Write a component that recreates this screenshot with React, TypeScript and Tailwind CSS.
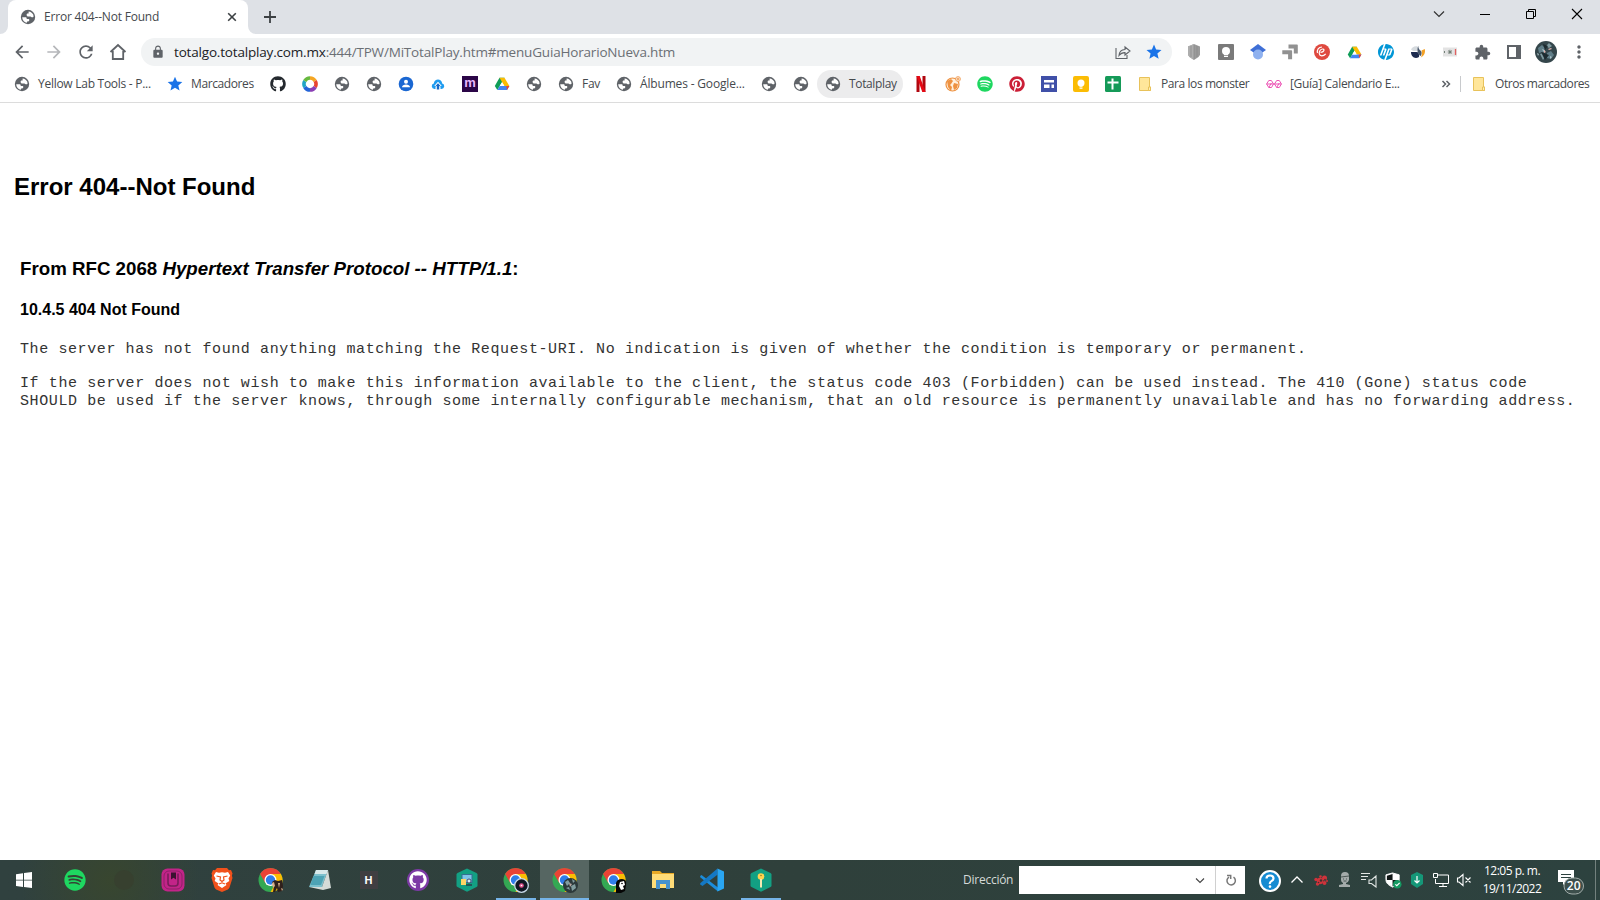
import type { ReactNode } from "react";
import { FaGithub, FaSpotify, FaPinterest } from "react-icons/fa";
import { SiHp } from "react-icons/si";
import { MdArrowBack, MdArrowForward, MdRefresh, MdLock, MdStar, MdExtension, MdMoreVert } from "react-icons/md";

function Globe({ className = "size-4" }: { className?: string }) {
  return (
    <svg viewBox="0 0 16 16" className={`shrink-0 ${className}`}>
      <circle cx="8" cy="8" r="7.2" fill="#5f6368" />
      <path d="M2.2 8.200h3.100c.9 0 1.400.5 1.400 1.200v.7h1.600c.7 0 1 .4 1 1 0 .8-.5 1.300-1.200 1.300H7v1.400C4.300 13.300 2.200 11 2.200 8.200z" fill="#fff" />
      <path d="M8.600 2.400c2 .2 3.700 1.400 4.600 3.100l.4 1.900c-.3.600-.8.900-1.400.9-.9 0-1-.9-1.800-.9H8.300c-1 0-1.700-.6-1.700-1.500 0-.8.600-1.300 1.300-1.300h.7z" fill="#fff" />
    </svg>
  );
}

function Drive({ className = "size-4" }: { className?: string }) {
  return (
    <svg viewBox="0 0 16 16" className={className}>
      <path d="M5.500 1.800h5L8 6.200 3.300 14 .8 10z" fill="#0f9d58" />
      <path d="M5.500 1.800h5L15.400 10h-5z" fill="#fbbc04" />
      <path d="M3.300 14l2.400-4h9.700L13 14z" fill="#4285f4" />
      <path d="M12.300 10h3.100L13 14z" fill="#ea4335" />
      <path d="M8 6.200L10.300 10H5.700z" fill="#fff" />
    </svg>
  );
}

function Folder() {
  return (
    <svg viewBox="0 0 16 16" className="size-4 shrink-0">
      <path d="M2.500 1.500h10v9.500h1v3.500h-11z" fill="#ffe69a" stroke="#e8c25a" />
      <path d="M11.500 14.500v-3.500h2v3.500z" fill="#fff0b5" stroke="#e8c25a" />
    </svg>
  );
}

function Chrome({ badge }: { badge: ReactNode }) {
  return (
    <svg viewBox="0 0 26 26" className="size-[26px]">
      <circle cx="12.500" cy="13" r="12" fill="#34a853" />
      <path d="M2.100 7A12 12 0 0 1 22.900 7H12.500l-5.200 9z" fill="#ea4335" />
      <path d="M22.900 7A12 12 0 0 1 12.500 25l5.200-9L12.500 7z" fill="#fbbc04" />
      <circle cx="12.500" cy="13" r="6" fill="#fff" />
      <circle cx="12.500" cy="13" r="4.700" fill="#2f7de9" />
      {badge}
    </svg>
  );
}

function Bookmark({ icon, label, width = "" }: { icon: ReactNode; label?: string; width?: string }) {
  return (
    <div className="flex h-7 shrink-0 items-center gap-2 px-2">
      <span className="flex size-4 shrink-0 items-center justify-center">{icon}</span>
      {label && <span className={`whitespace-nowrap ${width}`}>{label}</span>}
    </div>
  );
}

function ExtIcon({ children }: { children: ReactNode }) {
  return <div className="flex size-8 shrink-0 items-center justify-center">{children}</div>;
}

function TabStrip() {
  return (
    <div className="flex h-[34px] shrink-0 bg-[#dee1e6]">
      <svg viewBox="0 0 8 34" className="h-[34px] w-2 shrink-0">
        <path d="M8 26v8H0a8 8 0 0 0 8-8z" fill="#fff" />
      </svg>
      <div className="flex w-60 shrink-0 items-center rounded-t-lg bg-white pl-3">
        <Globe />
        <span className="ml-2 w-[180px] whitespace-nowrap text-[12px] tracking-[-0.200px] text-[#45494d]">Error 404--Not Found</span>
        <svg viewBox="0 0 16 16" className="size-4">
          <path d="M4.200 4.200l7.600 7.600M11.800 4.200l-7.600 7.600" stroke="#3c4043" strokeWidth="1.600" />
        </svg>
      </div>
      <svg viewBox="0 0 8 34" className="h-[34px] w-2 shrink-0">
        <path d="M0 26v8h8a8 8 0 0 1-8-8z" fill="#fff" />
      </svg>
      <svg viewBox="0 0 28 34" className="h-[34px] w-7">
        <path d="M14 11v12M8 17h12" stroke="#3c4043" strokeWidth="1.800" />
      </svg>
      <div className="ml-auto flex h-7 text-black">
        <svg viewBox="0 0 46 28" className="h-7 w-[46px]"><path d="M18 11.500l5 5 5-5" fill="none" stroke="#333" strokeWidth="1.200" /></svg>
        <svg viewBox="0 0 46 28" className="h-7 w-[46px]"><path d="M18 14.500h10" stroke="#000" /></svg>
        <svg viewBox="0 0 46 28" className="h-7 w-[46px]"><path d="M18.500 11.500h7v7h-7zM20.500 11.500v-2h7v7h-2" fill="none" stroke="#000" /></svg>
        <svg viewBox="0 0 46 28" className="h-7 w-[46px]"><path d="M18 9l10 10M28 9L18 19" stroke="#000" strokeWidth="1.100" /></svg>
      </div>
    </div>
  );
}

function Toolbar() {
  return (
    <div className="flex h-9 shrink-0 items-center bg-white pl-1.5 text-[#5f6368]">
      <ExtIcon><MdArrowBack className="size-[20px]" /></ExtIcon>
      <ExtIcon><MdArrowForward className="size-[20px] text-[#b5b7ba]" /></ExtIcon>
      <ExtIcon><MdRefresh className="size-5" /></ExtIcon>
      <ExtIcon>
        <svg viewBox="0 0 18 18" className="size-[18px]">
          <path d="M1.500 9L9 2l7.500 7M3.800 8v8h10.400V8" fill="none" stroke="#5f6368" strokeWidth="1.800" />
        </svg>
      </ExtIcon>
      <div className="ml-[7px] flex h-7 w-[1031px] shrink-0 items-center rounded-full bg-[#f1f3f4] pl-[10px] pr-[9px]">
        <MdLock className="size-[14px]" />
        <span className="ml-[9px] whitespace-nowrap text-[13.500px] tracking-[-0.180px] text-[#6b6f74]">
          <span className="text-[#202124]">totalgo.totalplay.com.mx</span>:444/TPW/MiTotalPlay.htm#menuGuiaHorarioNueva.htm
        </span>
        <svg viewBox="0 0 16 16" className="ml-auto size-4">
          <path d="M1 4v10.500h11V11M4 11.500c.3-3.800 2.700-5.800 6-6V3l5 4-5 4V8.600C7.500 8.500 5.500 9.500 4 11.500z" fill="none" stroke="#5f6368" strokeWidth="1.100" />
        </svg>
        <MdStar className="ml-[14px] size-[18px] text-[#1a73e8]" />
      </div>
      <div className="ml-1.5 flex items-center">
        <ExtIcon>
          <svg viewBox="0 0 16 16" className="size-4"><path d="M8 0l6 2.500v8q0 2-6 5.500-6-3.500-6-5.500v-8z" fill="#9a9a9a" /><path d="M8 0v16q-6-3.500-6-5.500v-8z" fill="#adadad" /><path d="M8 1v14M5 2v11M11 2v11" stroke="#868686" strokeWidth=".7" /></svg>
        </ExtIcon>
        <ExtIcon>
          <svg viewBox="0 0 16 16" className="size-4"><rect width="16" height="16" rx="1" fill="#7a7a7a" /><circle cx="8" cy="7" r="4" fill="#fff" /><path d="M6 10h4v3H6z" fill="#fff" /><path d="M6 11.500h4" stroke="#7a7a7a" strokeWidth=".7" /></svg>
        </ExtIcon>
        <ExtIcon>
          <svg viewBox="0 0 16 16" className="size-4"><path d="M0 6l8-6 8 6-5 3.500H5z" fill="#3f6fd6" /><circle cx="8" cy="10.500" r="5" fill="#8fb1ef" /></svg>
        </ExtIcon>
        <ExtIcon>
          <svg viewBox="0 0 16 16" className="size-4"><path d="M6.500.5H15q.8 0 .8.800V9.500h-4v-5H6.500zM.3 6.200h9q.8 0 .8.800v8.300h-4v-5H.3z" fill="#919191" /></svg>
        </ExtIcon>
        <ExtIcon>
          <svg viewBox="0 0 16 16" className="size-4"><circle cx="8" cy="8" r="8" fill="#df493f" /><path d="M6.500 8.300c1.800 0 3.700-1 3.500-2.400-.2-1.300-2.300-1.200-3.700.3-1.700 1.900-1.500 5.600 1.400 5.600 1.800 0 3-.8 4-2M3.500 9c-.8-3 1-6 4.500-6" fill="none" stroke="#fff" strokeWidth="1.200" /></svg>
        </ExtIcon>
        <ExtIcon><Drive className="size-[15px]" /></ExtIcon>
        <ExtIcon><SiHp className="size-4 text-[#0096d6]" /></ExtIcon>
        <ExtIcon>
          <svg viewBox="0 0 16 16" className="size-4"><path d="M1 5.500C2 3 5 1.500 7.500 2.500L7 7H3z" fill="#d5dade" /><path d="M1 8h5.500c2 0 3 2 2.500 5C5 15.500 1 13 1 8z" fill="#1d2b4f" /><path d="M8.200 1.800c.2 2.500.8 4 2.800 5.200 1 1 .8 3.500-.2 5C8.300 11 6.200 6.500 8.200 1.800z" fill="#47566b" /><path d="M11.500 6.500l3.300-1.500c.8 3.500-.5 7-4 8.500 1.200-2 1.500-4.500.7-7z" fill="#f4a125" /></svg>
        </ExtIcon>
        <ExtIcon>
          <svg viewBox="0 0 16 16" className="size-4"><rect x="1" y="3.500" width="14" height="9" fill="#e3e3e3" /><path d="M2.500 7v2M5.800 8H10M7.900 5.800V10M6.500 6.500l3 3M9.500 6.500l-3 3" stroke="#738078" /><path d="M13.500 5v6" stroke="#e06060" strokeWidth="1.300" /></svg>
        </ExtIcon>
        <ExtIcon><MdExtension className="size-[17px]" /></ExtIcon>
        <ExtIcon>
          <svg viewBox="0 0 16 16" className="size-4"><path d="M2 2h12v12H2z" fill="none" stroke="#5f6368" strokeWidth="2" /><path d="M10 2h4v12h-4z" fill="#5f6368" /></svg>
        </ExtIcon>
        <ExtIcon>
          <svg viewBox="0 0 22 22" className="size-[22px]"><circle cx="11" cy="11" r="11" fill="#34464b" /><path d="M3 7l4-3 3 3-2 4-4 1zM12 12l4-2 3 4-3 4-4-1z" fill="#607e88" /><path d="M5 13l3-1 2 4-2 3zM11 5l3-3 3 3-3 2z" fill="#7f9aa0" /><path d="M2 12l2 1-1 2zM7 8l3 1-1 3zM15 15l2 1-2 2z" fill="#a8c0c6" /><path d="M13 8l3-1 1 1-3 1zM9 9l2 2-2 1z" fill="#e0b4b0" /><path d="M8 3l5 2-3 4zM6 11l8 3-4 5z" fill="#1d2b30" /></svg>
        </ExtIcon>
        <ExtIcon><MdMoreVert className="ml-px size-5" /></ExtIcon>
      </div>
    </div>
  );
}

function BookmarksBar() {
  return (
    <div className="flex h-[33px] shrink-0 items-start border-b border-[#dcdcdc] bg-white px-1.5 text-[12px] tracking-[-0.300px] text-[#45494d]">
      <Bookmark icon={<Globe />} label="Yellow Lab Tools - P..." width="w-[113px] tracking-[-0.270px]" />
      <Bookmark icon={<MdStar className="size-4 scale-110 text-[#1a73e8]" />} label="Marcadores" width="w-[63px] tracking-[-0.400px]" />
      <Bookmark icon={<FaGithub className="size-4 text-[#24292e]" />} />
      <Bookmark
        icon={
          <svg viewBox="0 0 16 16" className="size-4" fill="none" strokeWidth="3.600">
            <path d="M8 2a6 6 0 0 1 5.200 3" stroke="#f5a623" />
            <path d="M13.200 5a6 6 0 0 1 0 6" stroke="#e8452f" />
            <path d="M13.200 11A6 6 0 0 1 8 14" stroke="#8a3fb5" />
            <path d="M8 14a6 6 0 0 1-5.200-3" stroke="#2464d8" />
            <path d="M2.800 11a6 6 0 0 1 0-6" stroke="#20a5c5" />
            <path d="M2.800 5A6 6 0 0 1 8 2" stroke="#67b93e" />
          </svg>
        }
      />
      <Bookmark icon={<Globe />} />
      <Bookmark icon={<Globe />} />
      <Bookmark icon={<svg viewBox="0 0 16 16" className="size-4"><circle cx="8" cy="8" r="7.300" fill="#1a67d2" /><circle cx="8" cy="5.800" r="2" fill="#fff" /><path d="M4 11.300c0-3.600 8-3.600 8 0z" fill="#fff" /></svg>} />
      <Bookmark icon={<svg viewBox="0 0 16 16" className="size-4"><path d="M4.500 13a2.800 2.800 0 0 1-.7-5.500C4.300 2.200 11.700 2.200 12.200 7.500a2.800 2.800 0 0 1-.7 5.500h-1V10.500h-5V13z" fill="#1f9cf0" /><path d="M8 5.800l3.800 4.200H9.700v1.500H6.300V10H4.200z" fill="#fff" /><path d="M8 7.200l2.500 2.800H9.200v3.500H6.800V10H5.500z" fill="#1668c9" /></svg>} />
      <Bookmark icon={<span className="flex size-4 items-center justify-center bg-[#2b0647] pb-[3px] font-['Liberation_Sans'] text-[13px] leading-none font-bold text-[#e9b7ff]">m</span>} />
      <Bookmark icon={<Drive />} />
      <Bookmark icon={<Globe />} />
      <Bookmark icon={<Globe />} label="Fav" width="w-[18px]" />
      <Bookmark icon={<Globe />} label="Álbumes - Google..." width="w-[105px] tracking-[-0.170px]" />
      <Bookmark icon={<Globe />} />
      <Bookmark icon={<Globe />} />
      <div className="mr-0.5 -ml-px pl-px">
        <div className="flex rounded-full bg-[#ececed]">
          <Bookmark icon={<Globe />} label="Totalplay" width="w-[46px] tracking-[-0.350px]" />
        </div>
      </div>
      <Bookmark icon={<svg viewBox="0 0 16 16" className="size-4"><path d="M3.500 0h3v16h-3zM9.500 0h3v16h-3z" fill="#b1060f" /><path d="M3.500 0h3.200l5.800 16H9.300z" fill="#e50914" /></svg>} />
      <Bookmark icon={<svg viewBox="0 0 16 16" className="size-4"><circle cx="7.500" cy="8.500" r="6.500" fill="#fff0dd" stroke="#ee9140" strokeWidth="1.200" /><path d="M2 5l4-2 2 2-2 3-1 1 2 2-1 4-3-4zM9 7l4 1-1 4-3 2-1-4z" fill="#ee9140" /><circle cx="13" cy="3" r="2.400" fill="#fff" stroke="#ee9140" strokeWidth=".8" /><path d="M13 1.500v3M11.500 3h3" stroke="#ee9140" /></svg>} />
      <Bookmark icon={<FaSpotify className="size-4 text-[#1ed760]" />} />
      <Bookmark icon={<FaPinterest className="size-4 text-[#cb1f37]" />} />
      <Bookmark icon={<svg viewBox="0 0 16 16" className="size-4"><rect width="16" height="16" fill="#4050a8" /><path d="M3 4h10v2.500H3zM3 8.500h5.500V12H3zM10.500 8.500H13V12h-2.500z" fill="#fff" /></svg>} />
      <Bookmark icon={<svg viewBox="0 0 16 16" className="size-4"><rect width="16" height="16" rx="2" fill="#fbbc04" /><circle cx="8" cy="7" r="3.500" fill="#fff" /><path d="M6.500 9h3v1.800h-3zM6.500 11.600h3v1.100h-3z" fill="#fff" /></svg>} />
      <Bookmark icon={<svg viewBox="0 0 16 16" className="size-4"><rect width="16" height="16" rx="1.500" fill="#159a58" /><path d="M2.500 6.500h11M7.500 2.500v11" stroke="#fff" strokeWidth="2" /></svg>} />
      <Bookmark icon={<Folder />} label="Para los monster" width="w-[89px] tracking-[-0.420px]" />
      <Bookmark icon={<svg viewBox="0 0 16 16" className="size-4" fill="none" stroke="#ec55b5" strokeWidth="1"><path d="M.6 8l2.200-3.500h2.600L7.500 8l-2 3.500H2.800zM8.500 8l2.200-3.500h2.600L15.400 8l-2.100 3.500h-2.600zM.5 8h15M2.800 11.500L5.400 7M10.700 11.500L13.300 7" /></svg>} label="[Guía] Calendario E..." width="w-[110px] tracking-[-0.310px]" />
      <svg viewBox="0 0 12 12" className="mt-2 ml-auto size-3"><path d="M2.500 3L5.500 6l-3 3M6.500 3l3 3-3 3" fill="none" stroke="#5f6368" strokeWidth="1.500" /></svg>
      <div className="mt-1.5 mr-[2px] ml-2 h-4 w-px bg-[#c8cacd]" />
      <Bookmark icon={<Folder />} label="Otros marcadores" width="w-[91px] tracking-[-0.450px]" />
    </div>
  );
}

function ErrorPage() {
  return (
    <main className="grow bg-white px-[14px] pt-[70px] font-['Liberation_Sans',Arial,sans-serif] text-black">
      <h2 className="text-[24px] leading-7 font-bold">Error 404--Not Found</h2>
      <div className="mt-[57px] pl-1.5">
        <h3 className="text-[18.720px] leading-[22px] font-bold">
          From RFC 2068 <i>Hypertext Transfer Protocol -- HTTP/1.1</i>:
        </h3>
        <h4 className="mt-[21px] text-[16px] leading-[18px] font-bold">10.4.5 404 Not Found</h4>
        <div className="font-['Liberation_Mono','Courier_New',monospace] text-[15px] leading-[18px] tracking-[0.600px] text-[#333]">
          <p className="mt-[22px] whitespace-nowrap">
            The server has not found anything matching the Request-URI. No indication is given of whether the condition is temporary or permanent.
          </p>
          <p className="mt-4 whitespace-nowrap">
            If the server does not wish to make this information available to the client, the status code 403 (Forbidden) can be used instead. The 410 (Gone) status code
            <br />
            SHOULD be used if the server knows, through some internally configurable mechanism, that an old resource is permanently unavailable and has no forwarding address.
          </p>
        </div>
      </div>
    </main>
  );
}

function Task({ children, state = "" }: { children?: ReactNode; state?: "" | "open" | "active" }) {
  return (
    <div className={`flex h-10 w-[49px] shrink-0 flex-col items-center ${state === "active" ? "bg-[#566662]" : ""}`}>
      <div className="flex h-[38px] items-center pt-0.5">{children}</div>
      {state && <div className={`h-0.5 bg-[#76b4e8] ${state === "active" ? "w-full" : "w-10"}`} />}
    </div>
  );
}

function Tray({ children, className = "w-6" }: { children: ReactNode; className?: string }) {
  return <div className={`flex shrink-0 items-center justify-center ${className}`}>{children}</div>;
}

function Hexagon({ children }: { children: ReactNode }) {
  return (
    <svg viewBox="0 0 24 24" className="size-6">
      <path d="M12 .5l9.500 4.500q1 .5 1 1.500v11q0 1-1 1.500L12 23.700 2.500 19q-1-.5-1-1.500v-11q0-1 1-1.500z" fill="#13a083" />
      {children}
    </svg>
  );
}

function Taskbar() {
  return (
    <footer className="flex h-10 shrink-0 items-center bg-linear-to-r from-[#30413f] via-[#2f403b] to-[#2d423f] text-white">
      <div className="flex w-[963px] shrink-0 bg-[radial-gradient(circle_at_110px_20px,#38462f,transparent_90px)] pl-px">
        <Task><svg viewBox="0 0 16 16" className="mr-[3px] size-4"><path d="M0 2.200l7-1v6.500H0zM8 1.100L16 0v7.700H8zM0 8.500h7V15l-7-1zM8 8.500h8V16l-8-1.100z" fill="#fff" /></svg></Task>
        <Task><FaSpotify className="size-[22px] text-[#1ed760]" /></Task>
        <Task><span className="size-5 rounded-full bg-[#37402f]" /></Task>
        <Task><svg viewBox="0 0 24 24" className="size-6"><rect x=".5" y=".5" width="23" height="23" rx="6" fill="#c22488" /><rect x="3" y="3" width="18" height="18" rx="5" fill="none" stroke="#8e2068" /><path d="M7 5.500V15q0 3 3 3h4q3 0 3-3V5.500" fill="none" stroke="#7a1c5a" strokeWidth="1.600" /><path d="M10 4.500h5v7L12.500 9.800 10 11.500z" fill="#3a1230" /></svg></Task>
        <Task>
          <svg viewBox="0 0 22 24" className="h-6 w-[22px]"><path d="M6 0h10l2 2.200 2-.2 1.500 3.500-.6 2 .6 2.500-3 9.500q-.5 1.200-1.600 2L11 24l-5.900-2.500q-1.100-.8-1.600-2L.5 10l.6-2.500-.6-2L2 2l2 .2z" fill="#f1511b" /><path d="M5 4l3 .7 3-.5 3 .5 3-.7 2.200 3.500-1.700 3 .8 2.500-3.800 2.500 1 1.500-4.500 3-4.500-3 1-1.500L3.700 13l.8-2.500-1.700-3z" fill="#fff" /><path d="M5.500 8l4 1-.5 3 2 1.500L13 12l-.5-3 4-1M8 16l3-1.200 3 1.200" fill="none" stroke="#f1511b" strokeWidth="1.200" /></svg>
        </Task>
        <Task><Chrome badge={<g><path d="M14 15l3-2 3 1 4-1 1 6-1 5-4 1-1-4-2 4h-2l1-6z" fill="#30201b" /><path d="M14 16l2-1 1 4-2 2zM20 16h2l-1 5zM23 21l2 1-1 2z" fill="#d9b08c" /></g>} /></Task>
        <Task>
          <svg viewBox="0 0 24 24" className="size-6"><path d="M8 2h12l-6 17H1z" fill="#7cc0cd" /><path d="M8 2h12l-1.500 4H6.500z" fill="#d7e8ea" /><path d="M20 2l3 18-8 2-14-3h13z" fill="#d5dbd8" /><path d="M5.500 8h11l-3.500 9H2.500z" fill="#4da3b5" /></svg>
        </Task>
        <Task><span className="flex size-[18px] items-center justify-center bg-[#403e42] font-['Liberation_Sans'] text-[11px] font-bold">H</span></Task>
        <Task><span className="flex size-[22px] items-center justify-center rounded-full bg-[#7c3aa5]"><FaGithub className="size-[18px] text-white" /></span></Task>
        <Task><Hexagon><rect x="7" y="6.500" width="10" height="8" fill="#7fc3e8" stroke="#356f91" /><rect x="6" y="11" width="5" height="6" fill="#ffd566" /><circle cx="14" cy="13" r="2" fill="#d0eaf8" stroke="#335" strokeWidth=".8" /><path d="M11 17h6" stroke="#263f49" strokeWidth="1.500" /></Hexagon></Task>
        <Task state="open"><Chrome badge={<g><circle cx="18.500" cy="18.500" r="6.800" fill="#101722" stroke="#c8d9e8" strokeWidth="1.300" /><circle cx="18.500" cy="18.500" r="2.300" fill="#e05690" /><circle cx="18.500" cy="18.500" r=".8" fill="#fff" /></g>} /></Task>
        <Task state="active"><Chrome badge={<g><circle cx="18.500" cy="18.500" r="7.500" fill="#2c393b" /><path d="M13 15l3-2 2 3-3 3zM19 19l4-2 1 4-4 3zM20 12l3 2-2 2zM14 21l3-1 1 3z" fill="#819d9f" /><path d="M17 16l3 1-2 3z" fill="#baa9a3" /></g>} /></Task>
        <Task><Chrome badge={<g><path d="M15 16q1-4 6-4t4 6l-1 6-4 2h-5z" fill="#050505" /><path d="M19 15l4-1 1 4-2 1 1 3-3 1-2-4z" fill="#fff" /><circle cx="21" cy="16.500" r=".8" /></g>} /></Task>
        <Task><svg viewBox="0 0 24 22" className="h-[22px] w-6"><path d="M1 2h8l2 2h12v15H1z" fill="#e8a927" /><path d="M1 5h22v14H1z" fill="#ffdc78" /><path d="M5 20v-9h14v9h-4v-5H9v5z" fill="#4792cf" /></svg></Task>
        <Task><svg viewBox="0 0 24 24" className="size-6"><path d="M1.500 7L18 19.500v4L.2 9.300V8z" fill="#1c8ddb" /><path d="M17.500.5v6.300L2.500 18 .2 16.500v-1.300z" fill="#1478c4" /><path d="M17.500.5L24 3.500v17l-6.500 3z" fill="#2aa6f2" /></svg></Task>
        <Task state="open"><Hexagon><circle cx="12" cy="8.500" r="3.300" fill="#ffd34f" /><path d="M11 11h2v8l-1 1-1-1z" fill="#f4e8b2" /><circle cx="12" cy="7.500" r=".8" fill="#9a7a20" /></Hexagon></Task>
      </div>
      <span className="w-14 shrink-0 text-[12px] tracking-[-0.250px] text-[#d5dad8]">Dirección</span>
      <div className="flex h-7 w-[226px] shrink-0 bg-white">
        <div className="flex w-[197px] items-center justify-end border-r border-[#d0d0d0] pr-[9px]">
          <svg viewBox="0 0 12 12" className="size-3"><path d="M2 4.500l4 4 4-4" fill="none" stroke="#444" strokeWidth="1.100" /></svg>
        </div>
        <div className="flex flex-1 items-center justify-center">
          <svg viewBox="0 0 12 12" className="size-3"><path d="M8.500 3.200A4.200 4.200 0 1 1 4 3.100M2 1.500h3.700V5" fill="none" stroke="#777" strokeWidth="1.500" /></svg>
        </div>
      </div>
      <Tray className="ml-[14px] w-[22px] pt-0.5">
        <svg viewBox="0 0 22 22" className="size-[22px]"><circle cx="11" cy="11" r="10" fill="#168bd2" stroke="#fff" strokeWidth="2" /><path d="M7.500 8.500Q7.500 5.500 11 5.500t3.500 3q0 1.500-2 2.600T11 14" fill="none" stroke="#fff" strokeWidth="2.200" /><circle cx="11" cy="16.600" r="1.300" fill="#fff" /></svg>
      </Tray>
      <Tray className="ml-1 w-6"><svg viewBox="0 0 14 14" className="size-[14px]"><path d="M1.500 9.500L7 4l5.500 5.500" fill="none" stroke="#fff" strokeWidth="1.300" /></svg></Tray>
      <Tray><svg viewBox="0 0 16 16" className="size-4"><g fill="#cf333b"><circle cx="7" cy="9" r="3.200" /><circle cx="11.500" cy="6" r="2.500" /><circle cx="3" cy="7.500" r="1.700" /><circle cx="4.500" cy="12" r="1.700" /><circle cx="11.500" cy="11" r="2" /><circle cx="7.500" cy="4.500" r="1.300" /><circle cx="14" cy="9" r="1" /></g><circle cx="8" cy="8.500" r="1.200" fill="#41312f" /><circle cx="12" cy="7.500" r=".8" fill="#41312f" /><circle cx="5.500" cy="10.500" r=".8" fill="#41312f" /></svg></Tray>
      <Tray><svg viewBox="0 0 16 16" className="size-4"><path d="M4 4q0-4 4-4t4 4v4q-1 3-3 3v1l4 1v2H2v-2l4-1v-1Q4 10 4 8z" fill="#a4abaa" /><path d="M4 5l8-1M6 7h1M9 7h1M6.500 9h3" stroke="#4b5754" /></svg></Tray>
      <Tray><svg viewBox="0 0 16 16" className="size-4"><path d="M0 1.500h9M0 4.500h7M0 7.500h5M8 8h2.500L15 4v11l-4.500-3.500H8z" fill="none" stroke="#e2e7e5" strokeWidth="1.100" /></svg></Tray>
      <Tray><svg viewBox="0 0 18 18" className="size-[17px]"><path d="M8 1l7 2v5c0 4-3 6-7 8-4-2-7-4-7-8V3z" fill="#fff" stroke="#fff" /><path d="M8 2v6.500H2V4zM8 8.500h6c0 3-2.500 5-6 6.500z" fill="#101716" /><circle cx="13" cy="13" r="4.500" fill="#159a62" /><path d="M11 13l1.500 1.500 3-3" fill="none" stroke="#fff" strokeWidth="1.200" /></svg></Tray>
      <Tray><svg viewBox="0 0 14 16" className="h-4 w-[14px]"><path d="M7 0l6 3v9l-6 4-6-4V3z" fill="#159778" /><path d="M7 4v7M4.500 8.500L7 11l2.500-2.500" fill="none" stroke="#fff" strokeWidth="1.200" /></svg></Tray>
      <Tray><svg viewBox="0 0 16 16" className="size-4"><path d="M5 3h10.500v8.500H2.500V7M10 11.500V14M6 14.500h8M.5 1.500h4v4h-4z" fill="none" stroke="#fff" /></svg></Tray>
      <Tray><svg viewBox="0 0 16 16" className="mr-0.5 size-4"><path d="M1.500 6H3l4-3.500v11L3 10H1.500zM9.500 5.500l5 5M14.500 5.500l-5 5" fill="none" stroke="#fff" strokeWidth="1.100" /></svg></Tray>
      <div className="w-[70px] shrink-0 text-center text-[12px] leading-[18px] tracking-[-0.500px] whitespace-nowrap">
        <div>12:05 p. m.</div>
        <div>19/11/2022</div>
      </div>
      <div className="ml-auto flex h-full w-[37px] shrink-0 items-center pt-1.5">
        <svg viewBox="0 0 28 28" className="size-7">
          <path d="M0 1h16v12H8l-3 3v-3H0z" fill="#fff" />
          <path d="M3 5.500h10M3 8.500h10" stroke="#2d423f" />
          <rect x="6" y="9" width="19.500" height="16" rx="8" fill="#3d4f4c" stroke="#a2adaa" />
          <text x="15.700" y="21.300" textAnchor="middle" fill="#fff" fontSize="12" fontWeight="600" fontFamily="Open Sans, sans-serif">20</text>
        </svg>
      </div>
      <div className="mr-1 h-full w-px bg-[#73817e]" />
    </footer>
  );
}

export default function App() {
  return (
    <div className="flex h-[900px] w-[1600px] flex-col overflow-hidden bg-white font-['Open_Sans','Noto_Sans',sans-serif]">
      <TabStrip />
      <Toolbar />
      <BookmarksBar />
      <ErrorPage />
      <Taskbar />
    </div>
  );
}
